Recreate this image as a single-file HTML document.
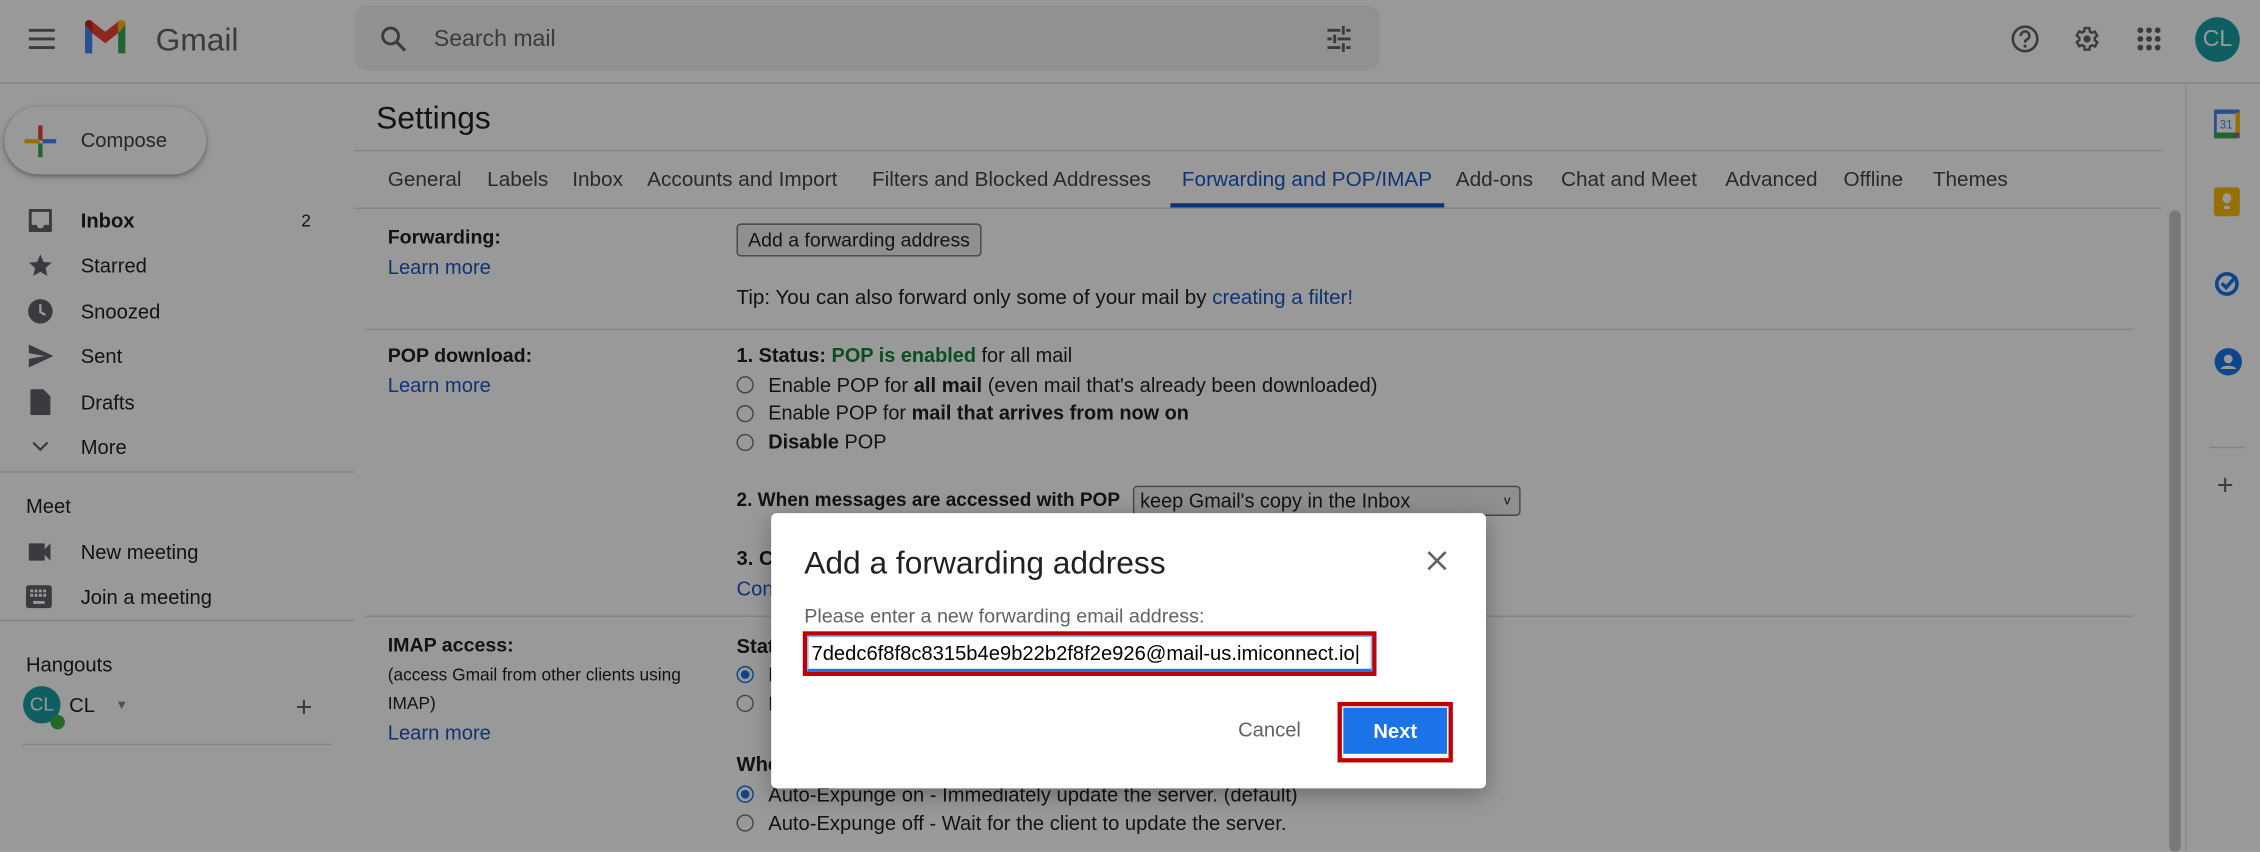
<!DOCTYPE html>
<html><head><meta charset="utf-8">
<style>
html,body{margin:0;padding:0;width:2260px;height:852px;overflow:hidden;background:#999a9c}
#s{position:absolute;left:0;top:0;width:1568px;height:591px;transform:scale(1.44133);transform-origin:0 0;background:#fff;font-family:"Liberation Sans",sans-serif;color:#202124;font-size:14px}
.a{position:absolute;white-space:nowrap;line-height:20px}
.ln{position:absolute;background:#dadce0;height:1px}
.lk{color:#1a56c2}
.b{font-weight:bold}
.r{position:absolute;width:10px;height:10px;border:1.5px solid #70757a;border-radius:50%}
.rs{border-color:#1a73e8}
.rs:after{content:"";position:absolute;left:2px;top:2px;width:6px;height:6px;border-radius:50%;background:#1a73e8}
.tab{position:absolute;top:115px;line-height:20px;color:#444746;font-size:14.4px;white-space:nowrap}
.nav{position:absolute;left:56px;line-height:20px;font-size:14px}
#ov{position:absolute;left:0;top:0;width:1568px;height:591px;background:rgba(0,0,0,.4)}
#dlg{position:absolute;left:535px;top:356px;width:496px;height:191px;background:#fff;border-radius:4px;box-shadow:0 4px 16px rgba(0,0,0,.3)}
</style></head><body><div id="s">
<svg class="a" style="left:19px;top:18px" width="20" height="18" viewBox="0 0 20 18"><path d="M1 3h18M1 9h18M1 15h18" stroke="#5f6368" stroke-width="2"/></svg>
<svg class="a" style="left:57px;top:13px" width="32" height="26" viewBox="0 0 32 26"><path d="M2 4v20h5V10z" fill="#4285f4"/><path d="M25 10v14h5V4z" fill="#34a853"/><path d="M2 4c0-3 3-4 5-2l9 7 9-7c2-2 5-1 5 2l-5 6-9 7-9-7z" fill="#ea4335"/><path d="M25 2c2-2 5-1 5 2l-5 6z" fill="#fbbc04"/><path d="M2 4c0-3 3-4 5-2v8z" fill="#c5221f"/></svg>
<div class="a" style="left:108px;top:15px;font-size:22px;line-height:26px;color:#5f6368">Gmail</div>
<div class="a" style="left:246px;top:4px;width:711px;height:45px;background:#f1f3f4;border-radius:8px"></div>
<svg class="a" style="left:263px;top:17px" width="20" height="20" viewBox="0 0 20 20"><circle cx="8" cy="8" r="5.5" stroke="#5f6368" stroke-width="2" fill="none"/><path d="M12 12l6 6" stroke="#5f6368" stroke-width="2.2"/></svg>
<div class="a" style="left:301px;top:17px;font-size:16px;line-height:22px;color:#5f6368">Search mail</div>
<svg class="a" style="left:919px;top:17px" width="20" height="20" viewBox="0 0 20 20"><path d="M2 4h9M15 4h3M2 10h3M9 10h9M2 16h9M15 16h3M13 1v6M7 7v6M13 13v6" stroke="#5f6368" stroke-width="2" fill="none"/></svg>
<svg class="a" style="left:1395px;top:17px" width="20" height="20" viewBox="0 0 20 20"><circle cx="10" cy="10" r="8.5" stroke="#5f6368" stroke-width="1.8" fill="none"/><path d="M7 8a3 3 0 1 1 4 2.6c-.9.4-1 1-1 2" stroke="#5f6368" stroke-width="1.8" fill="none"/><circle cx="10" cy="15" r="1.1" fill="#5f6368"/></svg>
<svg class="a" style="left:1438px;top:17px" width="20" height="20" viewBox="0 0 24 24"><path d="M19.4 13a7.5 7.5 0 0 0 0-2l2.1-1.6-2-3.5-2.5 1a7 7 0 0 0-1.7-1L15 3h-4l-.4 2.7a7 7 0 0 0-1.7 1l-2.5-1-2 3.5L6.6 11a7.5 7.5 0 0 0 0 2l-2.1 1.6 2 3.5 2.5-1a7 7 0 0 0 1.7 1L11 21h4l.4-2.7a7 7 0 0 0 1.7-1l2.5 1 2-3.5z" transform="translate(-1 0)" stroke="#5f6368" stroke-width="2" fill="none"/><circle cx="12" cy="12" r="3" fill="#5f6368"/></svg>
<svg class="a" style="left:1482px;top:18px" width="18" height="18" viewBox="0 0 18 18" fill="#5f6368"><circle cx="3" cy="3" r="2"/><circle cx="9" cy="3" r="2"/><circle cx="15" cy="3" r="2"/><circle cx="3" cy="9" r="2"/><circle cx="9" cy="9" r="2"/><circle cx="15" cy="9" r="2"/><circle cx="3" cy="15" r="2"/><circle cx="9" cy="15" r="2"/><circle cx="15" cy="15" r="2"/></svg>
<div class="a" style="left:1523px;top:12px;width:31px;height:31px;border-radius:50%;background:#1a9fa3;color:#fff;font-size:16px;line-height:31px;text-align:center">CL</div>
<div class="ln" style="left:0;top:57px;width:1568px"></div>
<div class="a" style="left:3px;top:74px;width:140px;height:47px;border-radius:24px;background:#fff;box-shadow:0 1px 3px rgba(0,0,0,.3),0 2px 6px rgba(0,0,0,.15)"></div>
<svg class="a" style="left:16px;top:86px" width="24" height="24" viewBox="0 0 24 24"><path d="M10.5 1h3v10.5h-3z" fill="#ea4335"/><path d="M1 10.5h10.5v3H1z" fill="#fbbc04"/><path d="M10.5 13.5h3V23h-3z" fill="#34a853"/><path d="M13.5 10.5H23v3h-9.5z" fill="#4285f4"/></svg>
<div class="a" style="left:56px;top:87px;font-size:14px;color:#3c4043">Compose</div>
<svg class="a" style="left:19px;top:144px" width="18" height="18" viewBox="0 0 18 18"><path d="M2 1h14a1 1 0 0 1 1 1v14a1 1 0 0 1-1 1H2a1 1 0 0 1-1-1V2a1 1 0 0 1 1-1zm1 2v9h3.5a2.5 2.5 0 0 0 5 0H15V3z" fill="#5f6368"/></svg>
<div class="nav b" style="top:143px">Inbox</div><div class="a" style="left:209px;top:143px;font-size:12px">2</div>
<svg class="a" style="left:19px;top:175px" width="18" height="18" viewBox="0 0 24 24"><path d="M12 2l3 7 7.5.6-5.7 5 1.8 7.4L12 18l-6.6 4 1.8-7.4-5.7-5L9 9z" fill="#5f6368"/></svg>
<div class="nav" style="top:174px">Starred</div>
<svg class="a" style="left:19px;top:207px" width="18" height="18" viewBox="0 0 18 18"><circle cx="9" cy="9" r="8.5" fill="#5f6368"/><path d="M9 4v5.5l3.5 2" stroke="#fff" stroke-width="1.6" fill="none"/></svg>
<div class="nav" style="top:206px">Snoozed</div>
<svg class="a" style="left:19px;top:238px" width="18" height="18" viewBox="0 0 18 18"><path d="M1 1l17 8-17 8v-6l11-2-11-2z" fill="#5f6368"/></svg>
<div class="nav" style="top:237px">Sent</div>
<svg class="a" style="left:21px;top:270px" width="14" height="18" viewBox="0 0 14 18"><path d="M1 0h8l5 5v12a1 1 0 0 1-1 1H1a1 1 0 0 1-1-1V1a1 1 0 0 1 1-1z" fill="#5f6368"/></svg>
<div class="nav" style="top:269px">Drafts</div>
<svg class="a" style="left:22px;top:305px" width="12" height="10" viewBox="0 0 12 10"><path d="M1 2l5 5 5-5" stroke="#5f6368" stroke-width="1.5" fill="none"/></svg>
<div class="nav" style="top:300px">More</div>
<div class="ln" style="left:0;top:327px;width:246px"></div>
<div class="a" style="left:18px;top:341px;font-size:14px">Meet</div>
<svg class="a" style="left:19px;top:376px" width="18" height="14" viewBox="0 0 18 14"><path d="M1 1h11v12H1zM12 5l4-4v12l-4-4z" fill="#5f6368"/></svg>
<div class="nav" style="top:373px">New meeting</div>
<svg class="a" style="left:18px;top:406px" width="18" height="16" viewBox="0 0 18 16"><rect x="0" y="0" width="18" height="16" rx="2" fill="#5f6368"/><path d="M3 3h2v2H3zM6 3h2v2H6zM9 3h2v2H9zM12 3h2v2h-2zM3 6h2v2H3zM6 6h2v2H6zM9 6h2v2H9zM12 6h2v2h-2zM5 11h8v2H5z" fill="#fff"/></svg>
<div class="nav" style="top:404px">Join a meeting</div>
<div class="ln" style="left:0;top:430px;width:246px"></div>
<div class="a" style="left:18px;top:451px;font-size:14px">Hangouts</div>
<div class="a" style="left:16px;top:476px;width:26px;height:26px;border-radius:50%;background:#1a9fa3;color:#fff;font-size:13px;line-height:26px;text-align:center">CL</div>
<div class="a" style="left:35px;top:496px;width:10px;height:10px;border-radius:50%;background:#3cb043"></div>
<div class="a" style="left:48px;top:479px;font-size:14px">CL</div>
<div class="a" style="left:80px;top:479px;font-size:9px;color:#80868b">▼</div>
<div class="a" style="left:205px;top:481px;font-size:20px;color:#5f6368">+</div>
<div class="ln" style="left:15px;top:516px;width:215px"></div>
<div class="a" style="left:261px;top:69px;font-size:22px;line-height:26px">Settings</div>
<div class="ln" style="left:246px;top:104px;width:1254px"></div>
<div class="tab" style="left:269px">General</div>
<div class="tab" style="left:338px">Labels</div>
<div class="tab" style="left:397px">Inbox</div>
<div class="tab" style="left:449px">Accounts and Import</div>
<div class="tab" style="left:605px">Filters and Blocked Addresses</div>
<div class="tab" style="left:820px;color:#1a56c2">Forwarding and POP/IMAP</div>
<div class="tab" style="left:1010px">Add-ons</div>
<div class="tab" style="left:1083px">Chat and Meet</div>
<div class="tab" style="left:1197px">Advanced</div>
<div class="tab" style="left:1279px">Offline</div>
<div class="tab" style="left:1341px">Themes</div>
<div class="a" style="left:812px;top:141px;width:190px;height:3px;background:#1a56c2"></div>
<div class="ln" style="left:246px;top:144px;width:1254px"></div>
<div class="a" style="left:1505px;top:146px;width:8px;height:445px;background:#c8c8c8;border-radius:4px"></div>
<div class="a" style="left:1516px;top:57px;width:1px;height:534px;background:#e8eaed"></div>
<svg class="a" style="left:1536px;top:76px" width="18" height="20" viewBox="0 0 18 20"><rect x="0" y="0" width="18" height="20" rx="1" fill="#4285f4"/><rect x="2" y="3" width="13" height="13" fill="#fff"/><rect x="15" y="2" width="3" height="15" fill="#fbbc04"/><rect x="0" y="16" width="15" height="4" fill="#34a853"/><path d="M15 16h3l-3 4z" fill="#ea4335"/><text x="8.5" y="13" font-size="8" text-anchor="middle" fill="#4285f4" font-family="Liberation Sans">31</text></svg>
<div class="a" style="left:1536px;top:130px;width:18px;height:20px;border-radius:2px;background:#fbbc04"></div>
<div class="a" style="left:1542px;top:134px;width:6px;height:7px;border-radius:50%;background:#fff"></div>
<div class="a" style="left:1543px;top:143px;width:4px;height:1.5px;background:#fff"></div>
<svg class="a" style="left:1536px;top:186px" width="20" height="20" viewBox="0 0 20 20"><circle cx="9" cy="11" r="7" stroke="#1a73e8" stroke-width="2.5" fill="none"/><path d="M5.5 10.5l3 3 7-8" stroke="#1a73e8" stroke-width="2.5" fill="none"/></svg>
<svg class="a" style="left:1536px;top:241px" width="20" height="20" viewBox="0 0 20 20"><circle cx="10" cy="10" r="9.5" fill="#1a73e8"/><circle cx="10" cy="8" r="3" fill="#fff"/><path d="M4.5 15c1-3 10-3 11 0z" fill="#fff"/></svg>
<div class="a" style="left:1533px;top:310px;width:25px;height:1px;background:#dadce0"></div>
<div class="a" style="left:1538px;top:327px;font-size:20px;color:#5f6368">+</div>
<div class="a b" style="left:269px;top:155px;font-size:13.6px">Forwarding:</div>
<div class="a lk" style="left:269px;top:175px">Learn more</div>
<div class="a" style="left:511px;top:155px;width:168px;height:21px;border:1px solid #767676;border-radius:3px;background:#efefef;line-height:21px;text-align:center;font-size:13.5px">Add a forwarding address</div>
<div class="a" style="left:511px;top:197px;font-size:14.3px">Tip: You can also forward only some of your mail by <span class="lk">creating a filter!</span></div>
<div class="ln" style="left:253px;top:228px;width:1227px"></div>
<div class="a b" style="left:269px;top:237px;font-size:13.6px">POP download:</div>
<div class="a lk" style="left:269px;top:257px">Learn more</div>
<div class="a" style="left:511px;top:237px;font-size:13.8px"><b>1. Status: </b><b style="color:#188038">POP is enabled</b> for all mail</div>
<div class="r" style="left:511px;top:261px"></div><div class="a" style="left:533px;top:257px;font-size:14px">Enable POP for <b>all mail</b> (even mail that's already been downloaded)</div>
<div class="r" style="left:511px;top:281px"></div><div class="a" style="left:533px;top:277px;font-size:13.8px">Enable POP for <b>mail that arrives from now on</b></div>
<div class="r" style="left:511px;top:301px"></div><div class="a" style="left:533px;top:297px;font-size:13.8px"><b>Disable</b> POP</div>
<div class="a b" style="left:511px;top:337px;font-size:13.2px">2. When messages are accessed with POP</div>
<div class="a" style="left:786px;top:337px;border:1px solid #767676;border-radius:3px;background:#efefef;line-height:19px;padding-left:4px;box-sizing:border-box;width:269px;height:21px;font-size:13.8px">keep Gmail's copy in the Inbox<span style="position:absolute;right:6px;font-size:9px">v</span></div>
<div class="a b" style="left:511px;top:377px">3. Configure your email client</div>
<div class="a lk" style="left:511px;top:398px">Configuration instructions</div>
<div class="ln" style="left:253px;top:427px;width:1227px"></div>
<div class="a b" style="left:269px;top:438px;font-size:13.6px">IMAP access:</div>
<div class="a" style="left:269px;top:458px;font-size:12px">(access Gmail from other clients using</div>
<div class="a" style="left:269px;top:478px;font-size:12px">IMAP)</div>
<div class="a lk" style="left:269px;top:498px">Learn more</div>
<div class="a b" style="left:511px;top:438px">Status: IMAP is enabled</div>
<div class="r rs" style="left:511px;top:462px"></div><div class="a" style="left:533px;top:458px">Enable IMAP</div>
<div class="r" style="left:511px;top:482px"></div><div class="a" style="left:533px;top:478px">Disable IMAP</div>
<div class="a b" style="left:511px;top:520px">When I mark a message in IMAP as deleted:</div>
<div class="r rs" style="left:511px;top:545px"></div><div class="a" style="left:533px;top:541px;font-size:14px">Auto-Expunge on - Immediately update the server. (default)</div>
<div class="r" style="left:511px;top:565px"></div><div class="a" style="left:533px;top:561px;font-size:14px">Auto-Expunge off - Wait for the client to update the server.</div>
<div id="ov"></div>
<div id="dlg">
<div class="a" style="left:23px;top:22px;font-size:22px;line-height:26px;color:#202124">Add a forwarding address</div>
<svg class="a" style="left:455px;top:26px" width="14" height="14" viewBox="0 0 14 14"><path d="M1 1l12 12M13 1L1 13" stroke="#5f6368" stroke-width="1.8"/></svg>
<div class="a" style="left:23px;top:62px;font-size:13.7px;color:#5f6368">Please enter a new forwarding email address:</div>
<div class="a" style="left:22px;top:82px;width:398px;height:31px;box-sizing:border-box;border:3px solid #c00000"></div>
<div class="a" style="left:25px;top:85px;width:392px;height:25px;box-sizing:border-box;border:1px solid #8ab4f8;border-bottom:2px solid #1a73e8;font-size:14px;line-height:22px;padding-left:2px;color:#000">7dedc6f8f8c8315b4e9b22b2f8f2e926@mail-us.imiconnect.io|</div>
<div class="a" style="left:324px;top:140px;font-size:14px;color:#5f6368">Cancel</div>
<div class="a" style="left:393px;top:131px;width:80px;height:42px;box-sizing:border-box;border:3px solid #c00000"></div>
<div class="a" style="left:397px;top:135px;width:72px;height:34px;background:#1a73e8;border-bottom:2px solid #fff;box-sizing:border-box;color:#fff;font-size:14px;font-weight:bold;line-height:32px;text-align:center">Next</div>
</div>
</div></body></html>
